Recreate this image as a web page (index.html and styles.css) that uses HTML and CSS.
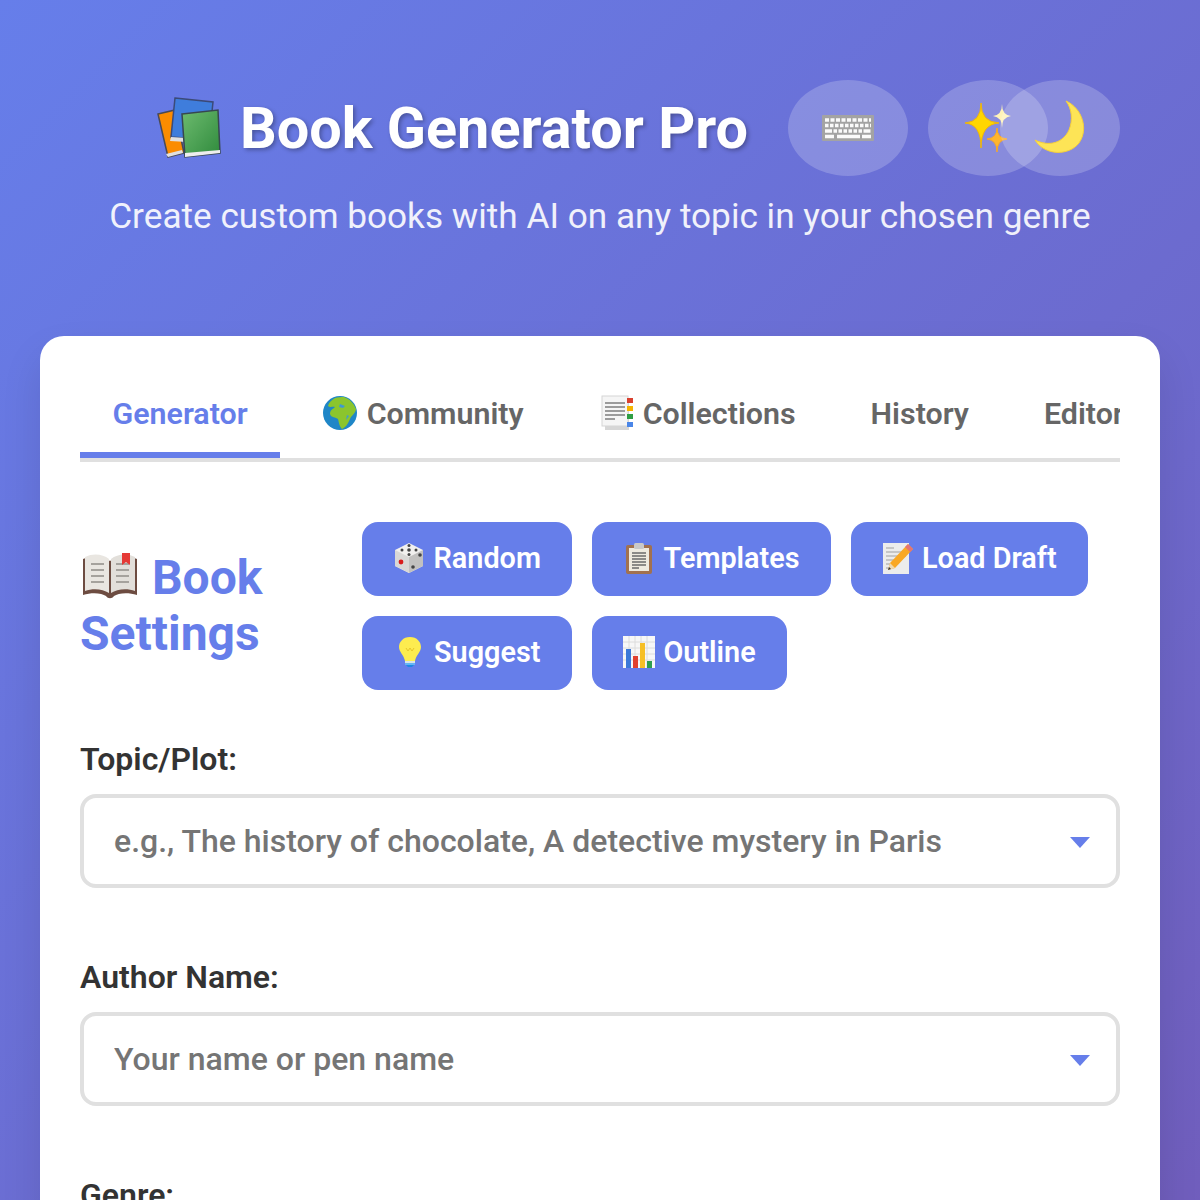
FILE: index.html
```html
<!DOCTYPE html>
<html lang="en">
<head>
    <meta charset="UTF-8">
    <meta name="viewport" content="width=device-width, initial-scale=1.0">
    <title>Book Generator Pro</title>
    <link rel="stylesheet" href="styles.css">
</head>
<body>

    <div class="header">
        <div class="title-row">
            <svg class="books" width="64" height="64" viewBox="0 0 64 64" aria-hidden="true">
                <defs>
                    <linearGradient id="greenCover" x1="0" y1="0" x2="1" y2="1">
                        <stop offset="0" stop-color="#6dbb6f"/>
                        <stop offset="1" stop-color="#2f8a3c"/>
                    </linearGradient>
                </defs>
                <path d="M1 18l17-4 9 43-16 4z" fill="#fb8c00" stroke="#4a4a55" stroke-width="1.5"/>
                <path d="M9 58l16-4 1 3-15 4z" fill="#e0e0e0"/>
                <path d="M18 2l38 4-4 38-38-3z" fill="#3f7ddc" stroke="#3b4a78" stroke-width="1.5"/>
                <path d="M14 41l16 1v4l-17-1z" fill="#e0e0e0"/>
                <path d="M25 18l36-4 2 43-35 4z" fill="url(#greenCover)" stroke="#37474f" stroke-width="1.5"/>
                <path d="M28 57l35-3v3l-35 4z" fill="#eeeeee"/>
            </svg>
            <h1>Book Generator Pro</h1>
            <button class="round-btn">
                <svg width="52" height="26" viewBox="0 0 52 26" aria-hidden="true">
                    <rect width="52" height="26" rx="1" fill="#a3a3a3"/>
                    <g stroke="#fafafa" stroke-width="3.5">
                        <path d="M3 5h46" stroke-dasharray="4 1.5"/>
                        <path d="M3 10.500h46" stroke-dasharray="3.500 1.500"/>
                        <path d="M3 16h46" stroke-dasharray="7 1.500 3.500 1.500 3.500 1.500 3.500 1.500 3.500 1.500 3.500 1.500 3.500 1.500"/>
                        <path d="M3 21.500h9M15 21.500h23M40 21.500h9"/>
                    </g>
                </svg>
            </button>
            <div class="theme-btns">
                <button class="round-btn">
                    <svg width="50" height="60" viewBox="0 0 50 60" aria-hidden="true">
                        <path d="M18 5Q18 24 36 25Q18 26 18 50Q18 26 2 25Q18 24 18 5z" fill="#ffd600" stroke="#f2b705" stroke-width="1"/>
                        <path d="M39 6Q39 17 48 18Q39 19 39 30Q39 19 30 18Q39 17 39 6z" fill="#fff3b8"/>
                        <path d="M34 30Q34 40 44 41Q34 42 34 54Q34 42 24 41Q34 40 34 30z" fill="#ffb52e" stroke="#f9a825" stroke-width="1"/>
                    </svg>
                </button>
                <button class="round-btn overlap">
                    <svg width="52" height="56" viewBox="0 0 52 56" aria-hidden="true">
                        <path d="M32 1C48 8 55 29 45 43C35 56 11 56 1 40C15 47 29 43 35 30C39 20 38 9 32 1z" fill="#fde456" stroke="#f6cf3a" stroke-width="1"/>
                    </svg>
                </button>
            </div>
        </div>
        <p class="subtitle">Create custom books with AI on any topic in your chosen genre</p>
    </div>

    <div class="card">
        <div class="tabs">
            <div class="tab active">Generator</div>
            <div class="tab">
                <svg width="34" height="34" viewBox="0 0 34 34" aria-hidden="true">
                    <circle cx="17" cy="17" r="17" fill="#1f86c7"/>
                    <path d="M12 2C9 4 6 6 5 10C8 12 9 10 12 11C10 13 7 14 7 18C8 22 13 21 15 23C16 26 16 30 19 33C24 31 26 25 28 21C31 18 33 15 33 13C31 8 27 3 21 1C18 1 15 1 12 2z" fill="#8bc52d"/>
                    <path d="M17 8l5 2-2 2-4-1zM24 19l2 1-3 4z" fill="#3d9ad1"/>
                </svg>
                Community
            </div>
            <div class="tab">
                <svg width="34" height="36" viewBox="-2 0 34 36" aria-hidden="true">
                    <rect x="4" y="5" width="24" height="30" fill="#d6d6d6"/>
                    <rect x="1" y="1" width="26" height="30" fill="#f5f5f5" stroke="#d5d5d5"/>
                    <path d="M4 8h20M4 12h20M4 16h20M4 20h20M4 24h10" stroke="#7d7d7d" stroke-width="1.300"/>
                    <rect x="26" y="3" width="6" height="5" fill="#d9402f"/>
                    <rect x="26" y="11" width="6" height="5" fill="#f5b400"/>
                    <rect x="26" y="19" width="6" height="5" fill="#2f9e44"/>
                    <rect x="26" y="27" width="6" height="5" fill="#4a86e8"/>
                </svg>
                Collections
            </div>
            <div class="tab">History</div>
            <div class="tab">Editor</div>
        </div>

        <div class="settings-head">
            <h2>
                <svg class="open-book" width="56" height="46" viewBox="0 0 56 46" aria-hidden="true">
                    <path d="M1 6C10 2 20 3 28 8C36 3 46 2 55 6V42C46 39 36 40 32 43C30 46 26 46 24 43C20 40 10 39 1 42z" fill="#6d4c41"/>
                    <path d="M3 4C11 0 21 1 27 6V40C21 36 11 35 3 38z" fill="#e9e6e1"/>
                    <path d="M53 4C45 0 35 1 29 6V40C35 36 45 35 53 38z" fill="#e2dfda"/>
                    <path d="M9 11h13M9 17h13M9 23h13M9 29h13M34 11h13M34 17h13M34 23h13M34 29h13" stroke="#a5a29d" stroke-width="2"/>
                    <path d="M40 0h8v12l-4-3-4 3z" fill="#e53935"/>
                </svg>
                Book Settings
            </h2>
            <div class="actions">
                <button class="action-btn wide">
                    <svg width="32" height="32" viewBox="0 0 32 32" aria-hidden="true">
                        <path d="M16 1L30 8V24L16 31L2 24V8z" fill="#f1f0ee"/>
                        <path d="M2 8l14 7v16L2 24z" fill="#d9d8d6"/>
                        <path d="M30 8l-14 7v16l14-7z" fill="#c2c1bf"/>
                        <circle cx="8" cy="20" r="2.400" fill="#d81b1b"/>
                        <g fill="#444">
                            <circle cx="16" cy="8" r="1.800"/>
                            <circle cx="9" cy="8" r="1.500"/>
                            <circle cx="23" cy="8" r="1.500"/>
                            <circle cx="16" cy="3.500" r="1.500"/>
                            <circle cx="16" cy="12.500" r="1.500"/>
                            <circle cx="27" cy="13" r="1.800"/>
                            <circle cx="20" cy="25" r="1.800"/>
                        </g>
                    </svg>
                    Random
                </button>
                <button class="action-btn">
                    <svg width="32" height="32" viewBox="0 0 32 32" aria-hidden="true">
                        <rect x="3" y="3" width="26" height="29" rx="2" fill="#a1714f"/>
                        <rect x="6" y="6" width="20" height="23" fill="#eeeadf"/>
                        <rect x="11" y="1" width="10" height="6" rx="1.500" fill="#c9c9c9"/>
                        <path d="M9 11h14M9 14h14M9 17h14M9 20h14M9 23h14M9 26h7" stroke="#6b6b6b" stroke-width="1.300"/>
                    </svg>
                    Templates
                </button>
                <button class="action-btn">
                    <svg width="32" height="32" viewBox="0 0 32 32" aria-hidden="true">
                        <rect x="1" y="1" width="26" height="31" fill="#ececec"/>
                        <path d="M4 6h8M4 10h20M4 14h20M4 18h14M4 22h10M4 26h6" stroke="#a0a0a0" stroke-width="1"/>
                        <path d="M26 2l5 5-18 19-7 2 2-7z" fill="#f9a825"/>
                        <path d="M26 2l5 5-3 3-5-5z" fill="#e57373"/>
                        <path d="M8 21l5 5-7 2z" fill="#efd9b0"/>
                        <path d="M7 25l2 2-3 1z" fill="#333"/>
                    </svg>
                    Load Draft
                </button>
                <button class="action-btn wide">
                    <svg width="32" height="32" viewBox="0 0 32 32" aria-hidden="true">
                        <path d="M16 1C9 1 5 6 5 11C5 16 10 19 11 25H21C22 19 27 16 27 11C27 6 23 1 16 1z" fill="#fdec4f"/>
                        <path d="M12 12l2 3 2-3 2 3 2-3" fill="none" stroke="#e8c62a" stroke-width="1"/>
                        <rect x="11" y="25" width="10" height="2" fill="#d7e3ea"/>
                        <rect x="11" y="27" width="10" height="2" fill="#64b5f6"/>
                        <path d="M12 29h8l-2 2h-4z" fill="#1e88e5"/>
                    </svg>
                    Suggest
                </button>
                <button class="action-btn">
                    <svg width="32" height="32" viewBox="0 0 32 32" aria-hidden="true">
                        <rect width="32" height="32" fill="#f7f7f7"/>
                        <path d="M0 6h32M0 12h32M0 18h32M0 24h32M6 0v32M12 0v32M18 0v32M24 0v32" stroke="#dcdcdc" stroke-width="1"/>
                        <rect x="3" y="13" width="5" height="19" fill="#3b78d8"/>
                        <rect x="10" y="20" width="5" height="12" fill="#e0402f"/>
                        <rect x="17" y="7" width="5" height="25" fill="#f6bf26"/>
                        <rect x="24" y="25" width="5" height="7" fill="#2e9e4f"/>
                    </svg>
                    Outline
                </button>
            </div>
        </div>

        <div class="field">
            <label for="topic">Topic/Plot:</label>
            <div class="input-wrap">
                <input type="text" id="topic" placeholder="e.g., The history of chocolate, A detective mystery in Paris">
                <span class="arrow"></span>
            </div>
        </div>

        <div class="field">
            <label for="author">Author Name:</label>
            <div class="input-wrap">
                <input type="text" id="author" placeholder="Your name or pen name">
                <span class="arrow"></span>
            </div>
        </div>

        <div class="field">
            <label for="genre">Genre:</label>
            <div class="input-wrap">
                <input type="text" id="genre">
                <span class="arrow"></span>
            </div>
        </div>
    </div>

</body>
</html>
```

FILE: styles.css
```css
* {
    box-sizing: border-box;
}

body {
    margin: 0;
    padding: 80px 40px 40px;
    min-height: 2600px;
    font-family: Roboto, "Noto Sans", sans-serif;
    background: linear-gradient(135deg, #667eea 0%, #764ba2 100%);
    color: #333;
}

.header {
    text-align: center;
    color: white;
    margin-bottom: 99px;
}

.title-row {
    display: flex;
    justify-content: flex-end;
    align-items: center;
    gap: 19px;
    padding-right: 40px;
    margin-bottom: 19px;
}

h1 {
    margin: 0 21px 0 0;
    font-size: 57.6px;
    font-weight: 700;
    text-shadow: 2px 2px 4px rgba(0, 0, 0, 0.3);
}

.theme-btns {
    display: flex;
    margin-left: 1px;
}

.round-btn {
    display: flex;
    align-items: center;
    justify-content: center;
    width: 120px;
    height: 96px;
    padding: 0;
    border: none;
    border-radius: 50%;
    background-color: rgba(255, 255, 255, 0.2);
}

.overlap {
    margin-left: -48px;
}

.subtitle {
    margin: 0;
    font-size: 35.2px;
    opacity: 0.9;
}

.card {
    background-color: white;
    border-radius: 24px;
    padding: 40px;
    box-shadow: 0 20px 40px rgba(0, 0, 0, 0.1);
}

.tabs {
    display: flex;
    gap: 10px;
    overflow: hidden;
    border-bottom: 4px solid #e0e0e0;
    margin-bottom: 60px;
}

.tab {
    display: flex;
    align-items: center;
    gap: 10px;
    flex-shrink: 0;
    padding: 0 32.5px 8px;
    height: 82px;
    font-size: 30.4px;
    font-weight: 600;
    color: #666;
    white-space: nowrap;
}

.tab.active {
    color: #667eea;
    border-bottom: 6px solid #667eea;
    padding-bottom: 2px;
}

.settings-head {
    display: flex;
    align-items: center;
    gap: 20px;
    margin-bottom: 50px;
}

h2 {
    flex: 0 0 262px;
    margin: 0;
    font-size: 48px;
    line-height: 56px;
    font-weight: 700;
    color: #667eea;
}

.open-book {
    margin: 0 2px;
    vertical-align: -5px;
}

.actions {
    display: flex;
    flex-wrap: wrap;
    gap: 20px;
}

.action-btn {
    display: flex;
    align-items: center;
    justify-content: center;
    gap: 8.5px;
    height: 74px;
    padding: 0 31px 2px;
    border: none;
    border-radius: 16px;
    font-family: inherit;
    font-size: 28.8px;
    font-weight: 600;
    color: white;
    background-color: #667eea;
}

.action-btn.wide {
    min-width: 210px;
}

.field {
    margin-bottom: 70px;
}

label {
    display: block;
    margin-bottom: 16px;
    font-size: 32px;
    font-weight: 600;
    color: #333;
}

.input-wrap {
    position: relative;
}

input {
    display: block;
    width: 100%;
    height: 94px;
    padding: 0 30px;
    border: 4px solid #e0e0e0;
    border-radius: 16px;
    font-family: inherit;
    font-size: 32px;
    color: #333;
    background-color: white;
}

input::placeholder {
    color: #757575;
    font-weight: 500;
}

.arrow {
    position: absolute;
    right: 30px;
    top: 43px;
    border-left: 10px solid transparent;
    border-right: 10px solid transparent;
    border-top: 11px solid #667eea;
}
```
